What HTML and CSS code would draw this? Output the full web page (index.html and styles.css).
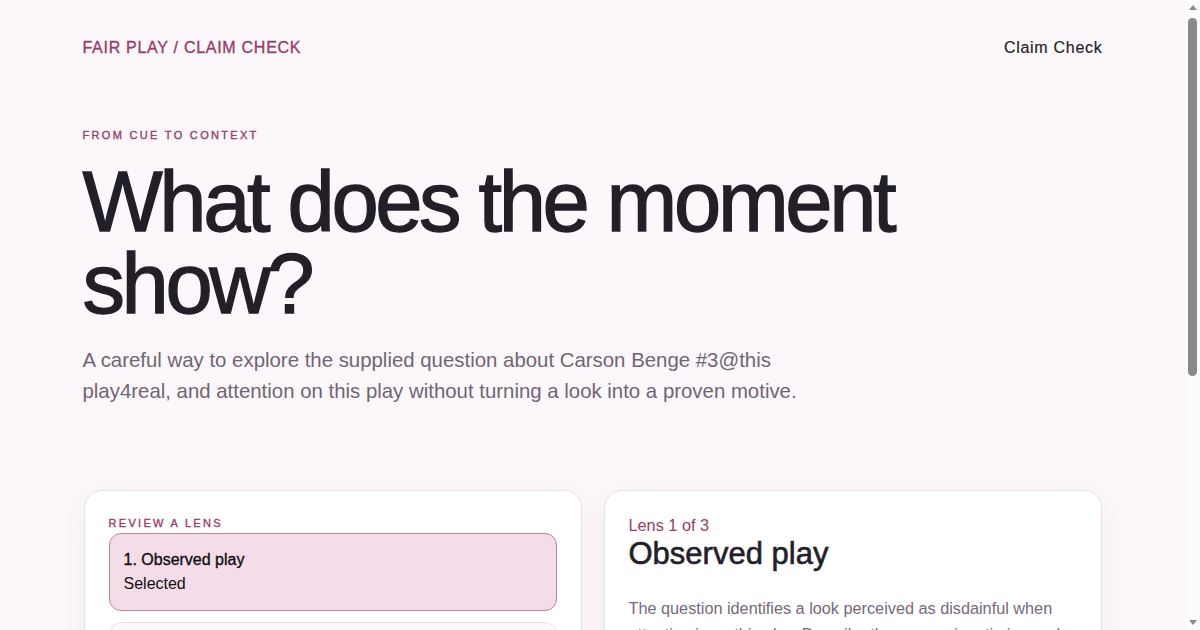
FILE: index.html
```html
<!DOCTYPE html>
<html lang="en">
<head>
  <meta charset="UTF-8">
  <title>Fair Play / Claim Check</title>
  <link rel="stylesheet" href="styles.css">
</head>

<body>
  <div class="page">
    <!-- Top bar -->
    <header class="topbar">
      <a href="#" class="brand">FAIR PLAY / CLAIM CHECK</a>
      <a href="#" class="top-link">Claim Check</a>
    </header>

    <!-- Hero -->
    <section class="hero">
      <div class="eyebrow">FROM CUE TO CONTEXT</div>
      <h1 class="headline">What does the moment show?</h1>
      <p class="intro">
        A careful way to explore the supplied question about Carson Benge #3@this
        play4real, and attention on this play without turning a look into a proven motive.
      </p>
    </section>

    <!-- Lens explorer -->
    <section class="explorer">
      <div class="card lens-list">
        <div class="card-label">REVIEW A LENS</div>
        <div class="options">
          <button class="option is-selected">
            <span class="option-title">1. Observed play</span>
            <span class="option-state">Selected</span>
          </button>
          <button class="option">
            <span class="option-title">2. Possible context</span>
            <span class="option-state">Review</span>
          </button>
          <button class="option">
            <span class="option-title">3. Fair conclusion</span>
            <span class="option-state">Review</span>
          </button>
        </div>
      </div>

      <div class="card lens-detail">
        <div class="lens-count">Lens 1 of 3</div>
        <h2 class="lens-title">Observed play</h2>
        <p class="lens-text">
          The question identifies a look perceived as disdainful when
          attention is on this play. Describe the expression, timing and
          who it seems aimed at before drawing any conclusion.
        </p>
        <p class="lens-text">
          A single frame rarely shows intent. Note what can be seen, and
          keep it separate from what is being assumed.
        </p>
        <div class="lens-nav">
          <button class="nav-btn" disabled>Previous</button>
          <button class="nav-btn primary">Next lens</button>
        </div>
      </div>
    </section>

    <footer class="foot">
      Fair Play keeps observation, context and conclusion apart.
    </footer>
  </div>

  <!-- Barra di scorrimento disegnata (il browser headless la nasconde) -->
  <div class="scrollbar" aria-hidden="true">
    <span class="sb-arrow up"></span>
    <span class="sb-thumb"></span>
    <span class="sb-arrow down"></span>
  </div>
</body>
</html>
```

FILE: styles.css
```css
/* ===============================
   BASE
=============================== */
html, body {
  margin: 0;
  padding: 0;
}
body {
  margin-right: 15px;
  background: #fbf7fa;
  color: #241f2a;
  font-family: "Liberation Sans", Arial, sans-serif;
}
.page {
  max-width: 1020px;
  margin: 0 auto;
}

/* Testo "pieno": grassetto leggero senza cambiare le larghezze */
.brand,
.eyebrow,
.card-label,
.option-title {
  -webkit-text-stroke: 0.35px currentColor;
}
.top-link {
  -webkit-text-stroke: 0.2px currentColor;
}

/* ===============================
   TOP BAR
=============================== */
.topbar {
  display: flex;
  justify-content: space-between;
  align-items: center;
  padding-top: 37px;
}
.brand,
.top-link {
  font-size: 16px;
  line-height: 22px;
  letter-spacing: 0.045em;
  text-decoration: none;
}
.brand {
  color: #983d69;
}
.top-link {
  color: #241f2a;
}

/* ===============================
   HERO
=============================== */
.hero {
  padding-top: 68px;
}
.eyebrow,
.card-label {
  font-size: 11px;
  line-height: 16px;
  letter-spacing: 0.21em;
  color: #983d69;
}
.headline {
  margin: 18px 0 0;
  max-width: 860px;
  font-size: 85px;
  font-weight: 400;
  line-height: 82px;
  letter-spacing: -0.04em;
  color: #231f29;
  -webkit-text-stroke: 1.3px #231f29;
}
.intro {
  margin: 20px 0 0;
  max-width: 740px;
  font-size: 20.4px;
  line-height: 31px;
  color: #706673;
}

/* ===============================
   EXPLORER CARDS
=============================== */
.explorer {
  display: grid;
  grid-template-columns: 1fr 1fr;
  gap: 22px;
  margin-top: 83px;
  padding: 0 1px;
  align-items: start;
}
.card {
  background: #ffffff;
  border: 1px solid #ebdfe8;
  border-radius: 18px;
  padding: 24px;
  box-shadow: 0 10px 30px rgba(152, 61, 105, 0.06);
}
.card-label {
  margin-bottom: 2px;
}
.options {
  display: flex;
  flex-direction: column;
  gap: 11px;
}
.option {
  display: flex;
  flex-direction: column;
  align-items: flex-start;
  padding: 14px;
  background: #fdf9fb;
  border: 1px solid #eddfe8;
  border-radius: 12px;
  font-family: inherit;
  font-size: 16px;
  line-height: 24px;
  color: #111111;
  text-align: left;
  cursor: pointer;
}
.option.is-selected {
  background: #f4dce8;
  border-color: #c6819f;
}

.lens-count {
  font-size: 16.3px;
  line-height: 20px;
  color: #983d69;
}
.lens-title {
  margin: 0;
  font-size: 31px;
  font-weight: 400;
  line-height: 37px;
  color: #231f29;
  -webkit-text-stroke: 0.6px #231f29;
}
.lens-text {
  margin: 23px 0 0;
  font-size: 16.25px;
  line-height: 26px;
  color: #746a77;
}
.lens-nav {
  display: flex;
  gap: 10px;
  margin-top: 24px;
}
.nav-btn {
  padding: 10px 16px;
  border: 1px solid #ebdfe8;
  border-radius: 10px;
  background: #fdf9fb;
  font-family: inherit;
  font-size: 15px;
  color: #241f2a;
}
.nav-btn.primary {
  background: #983d69;
  border-color: #983d69;
  color: #ffffff;
}

/* ===============================
   FOOTER
=============================== */
.foot {
  padding: 60px 0 80px;
  font-size: 14px;
  color: #706673;
}

/* ===============================
   SCROLLBAR (disegnata)
=============================== */
.scrollbar {
  position: fixed;
  top: 0;
  right: 0;
  width: 15px;
  height: 100%;
  background: #fbfbfb;
}
.sb-thumb {
  position: absolute;
  top: 18px;
  left: 3px;
  width: 9px;
  height: 358px;
  border-radius: 5px;
  background: #8a8a8a;
}
.sb-arrow {
  position: absolute;
  left: 3.5px;
  width: 0;
  height: 0;
  border-left: 4px solid transparent;
  border-right: 4px solid transparent;
}
.sb-arrow.up {
  top: 5px;
  border-bottom: 5px solid #8a8a8a;
}
.sb-arrow.down {
  bottom: 5px;
  border-top: 5px solid #8a8a8a;
}
```
